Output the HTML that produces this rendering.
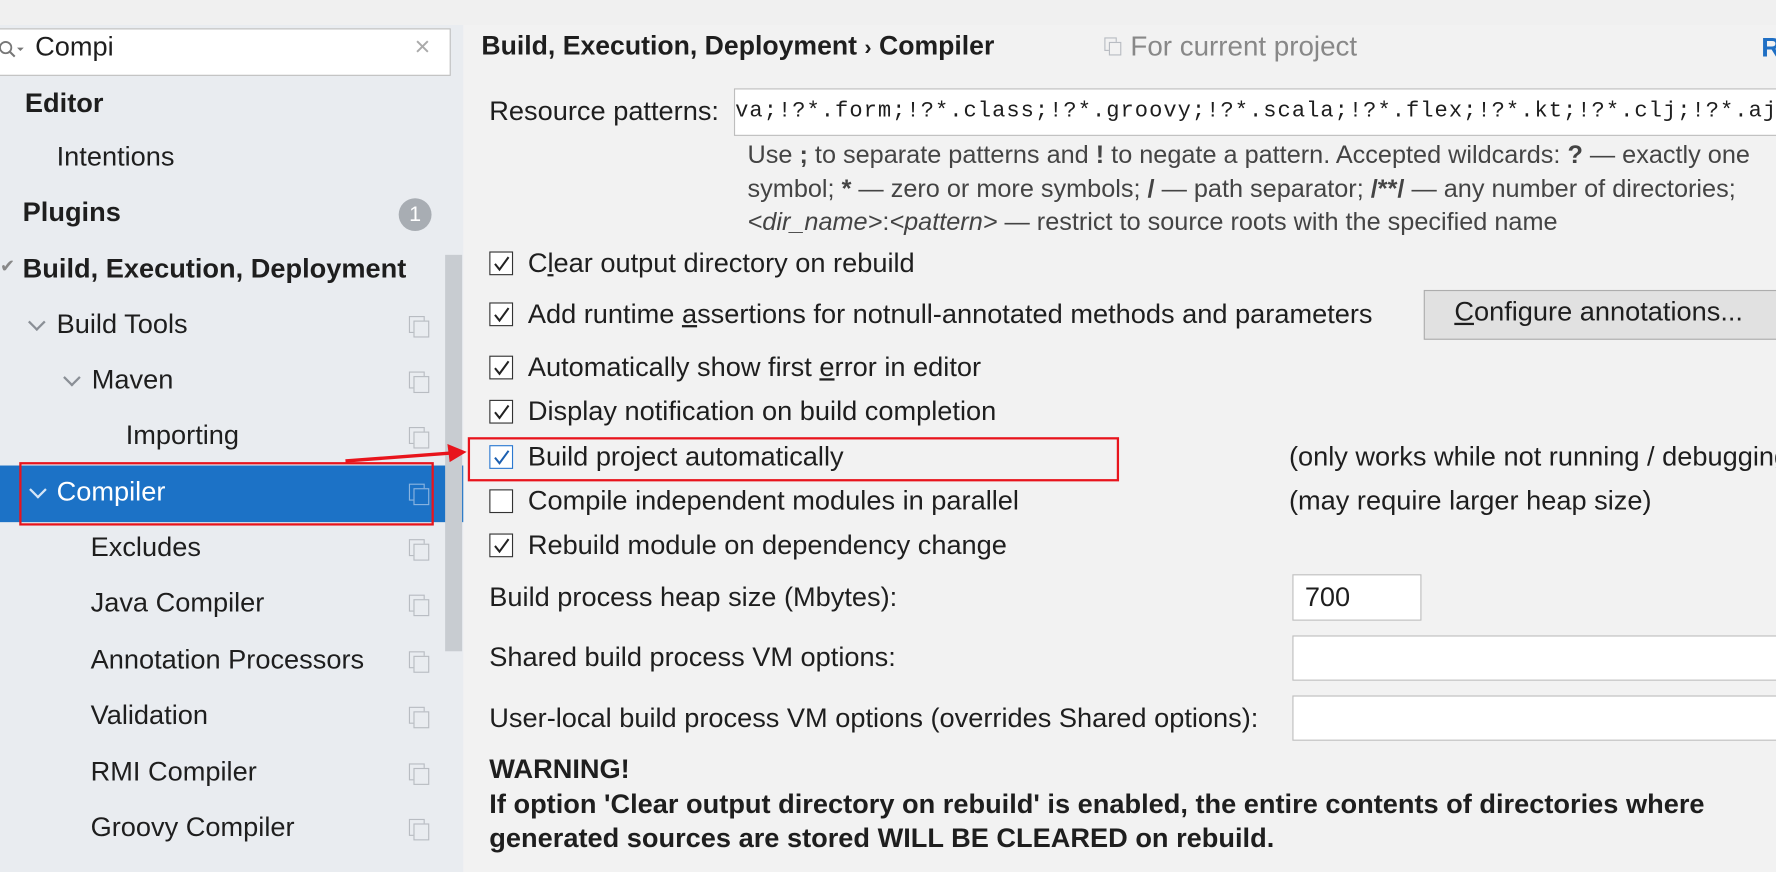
<!DOCTYPE html>
<html><head><meta charset="utf-8"><style>
html,body{margin:0;padding:0;width:1776px;height:872px;overflow:hidden;background:#f2f2f2}
#w{position:absolute;left:0;top:0;width:1568px;height:770px;transform:scale(1.13265);transform-origin:0 0;font-family:"Liberation Sans",sans-serif;color:#1e1e1e;font-size:24px}
.a{position:absolute;white-space:nowrap}
#left{position:absolute;left:0;top:0;width:409px;height:770px;background:#e9ecf0}
.b{font-weight:bold}
.ic{position:absolute;width:12px;height:13px;border:1.5px solid #b8bcc2;background:#e9ecf0}
.cb{position:absolute;left:432px;width:19px;height:19px;border:1.5px solid #333;background:#fff}
.cb svg{position:absolute;left:1px;top:1px}
.inp{position:absolute;background:#fff;border:1.5px solid #bdbdbd}
.h{color:#444;font-size:22.3px}
.chev{position:absolute;width:9px;height:9px;border-right:2px solid #8a8f96;border-bottom:2px solid #8a8f96;transform:rotate(45deg)}
</style></head><body><div id="w">
<div id="left"></div>
<div class="a" style="left:0;top:0;width:1568px;height:22px;background:#f0f0f0"></div>
<div class="inp" style="left:-2px;top:25px;width:398px;height:40px"></div>
<svg class="a" style="left:0;top:34px" width="22" height="20"><circle cx="5" cy="8" r="5" fill="none" stroke="#777" stroke-width="1.6"/><line x1="9" y1="12" x2="13" y2="16" stroke="#777" stroke-width="1.8"/><path d="M15 8h6l-3 3z" fill="#777"/></svg>
<div class="a" style="left:31px;top:28px;font-size:24px">Compi</div>
<div class="a" style="left:366px;top:28px;font-size:24px;color:#aaa">×</div>
<div class="a b" style="left:22px;top:78px">Editor</div>
<div class="a" style="left:50px;top:125px">Intentions</div>
<div class="a b" style="left:20px;top:174px">Plugins</div>
<div class="a" style="left:352px;top:175px;width:29px;height:29px;border-radius:50%;background:#a8adb3;color:#fff;text-align:center;line-height:29px;font-size:19px">1</div>
<div class="a" style="left:0;top:225px;color:#888;font-size:16px">✔</div>
<div class="a b" style="left:20px;top:224px">Build, Execution, Deployment</div>
<div class="chev" style="left:27px;top:279px"></div>
<div class="a" style="left:50px;top:273px">Build Tools</div>
<div class="chev" style="left:58px;top:328px"></div>
<div class="a" style="left:81px;top:322px">Maven</div>
<div class="a" style="left:111px;top:371px">Importing</div>
<div class="a" style="left:0;top:411px;width:409px;height:50px;background:#1c72c6"></div>
<div class="chev" style="left:28px;top:427px;border-color:#d6e6f6"></div>
<div class="a" style="left:50px;top:421px;color:#fff">Compiler</div>
<div class="a" style="left:80px;top:470px">Excludes</div>
<div class="a" style="left:80px;top:519px">Java Compiler</div>
<div class="a" style="left:80px;top:569px">Annotation Processors</div>
<div class="a" style="left:80px;top:618px">Validation</div>
<div class="a" style="left:80px;top:668px">RMI Compiler</div>
<div class="a" style="left:80px;top:717px">Groovy Compiler</div>
<div class="a" style="left:393px;top:225px;width:15px;height:350px;background:#c8ccd1"></div>
<div class="ic" style="left:361px;top:279px"></div><div class="ic" style="left:365px;top:283px"></div>
<div class="ic" style="left:361px;top:328px"></div><div class="ic" style="left:365px;top:332px"></div>
<div class="ic" style="left:361px;top:377px"></div><div class="ic" style="left:365px;top:381px"></div>
<div class="ic" style="left:361px;top:427px;background:#1c72c6;border-color:#8ab4e0"></div><div class="ic" style="left:365px;top:431px;background:#1c72c6;border-color:#8ab4e0"></div>
<div class="ic" style="left:361px;top:476px"></div><div class="ic" style="left:365px;top:480px"></div>
<div class="ic" style="left:361px;top:525px"></div><div class="ic" style="left:365px;top:529px"></div>
<div class="ic" style="left:361px;top:575px"></div><div class="ic" style="left:365px;top:579px"></div>
<div class="ic" style="left:361px;top:624px"></div><div class="ic" style="left:365px;top:628px"></div>
<div class="ic" style="left:361px;top:674px"></div><div class="ic" style="left:365px;top:678px"></div>
<div class="ic" style="left:361px;top:723px"></div><div class="ic" style="left:365px;top:727px"></div>
<div class="a" style="left:17px;top:408px;width:362px;height:52px;border:2px solid #e8141c"></div>

<div class="a b" style="left:425px;top:27px;font-size:23.5px">Build, Execution, Deployment <span style="font-size:19px">›</span> Compiler</div>
<div class="ic" style="left:975px;top:33px;width:9px;height:10px;background:#f2f2f2"></div><div class="ic" style="left:979px;top:37px;width:9px;height:10px;background:#f2f2f2"></div>
<div class="a" style="left:998px;top:28px;color:#888;font-size:24.5px">For current project</div>
<div class="a b" style="left:1555px;top:29px;color:#1f6fc4">R</div>
<div class="a" style="left:432px;top:85px">Resource patterns:</div>
<div class="inp" style="left:648px;top:78px;width:930px;height:40px;overflow:hidden"><div class="a" style="right:10px;top:8px;font-family:'Liberation Mono',monospace;font-size:19.5px;letter-spacing:0.9px">*.java;!?*.form;!?*.class;!?*.groovy;!?*.scala;!?*.flex;!?*.kt;!?*.clj;!?*.aj</div></div>
<div class="a h" style="left:660px;top:124px">Use <b>;</b> to separate patterns and <b>!</b> to negate a pattern. Accepted wildcards: <b>?</b> — exactly one</div>
<div class="a h" style="left:660px;top:154px">symbol; <b>*</b> — zero or more symbols; <b>/</b> — path separator; <b>/**/</b> — any number of directories;</div>
<div class="a h" style="left:660px;top:183px"><i>&lt;dir_name&gt;</i>:<i>&lt;pattern&gt;</i> — restrict to source roots with the specified name</div>

<div class="cb" style="top:222px"><svg width="18" height="18"><path d="M3 9l4 5 8-11" fill="none" stroke="#222" stroke-width="1.8"/></svg></div>
<div class="a" style="left:466px;top:219px">C<u>l</u>ear output directory on rebuild</div>
<div class="cb" style="top:267px"><svg width="18" height="18"><path d="M3 9l4 5 8-11" fill="none" stroke="#222" stroke-width="1.8"/></svg></div>
<div class="a" style="left:466px;top:264px">Add runtime <u>a</u>ssertions for notnull-annotated methods and parameters</div>
<div class="a" style="left:1257px;top:256px;width:320px;height:42px;background:#e1e1e1;border:1.5px solid #adadad"></div>
<div class="a" style="left:1284px;top:262px"><u>C</u>onfigure annotations...</div>
<div class="cb" style="top:314px"><svg width="18" height="18"><path d="M3 9l4 5 8-11" fill="none" stroke="#222" stroke-width="1.8"/></svg></div>
<div class="a" style="left:466px;top:311px">Automatically show first <u>e</u>rror in editor</div>
<div class="cb" style="top:353px"><svg width="18" height="18"><path d="M3 9l4 5 8-11" fill="none" stroke="#222" stroke-width="1.8"/></svg></div>
<div class="a" style="left:466px;top:350px">Display notification on build completion</div>
<div class="cb" style="top:393px;border-color:#2b78d0"><svg width="18" height="18"><path d="M3 9l4 5 8-11" fill="none" stroke="#1c5fb0" stroke-width="1.8"/></svg></div>
<div class="a" style="left:466px;top:390px">Build project automatically</div>
<div class="a" style="left:1138px;top:390px">(only works while not running / debugging)</div>
<div class="cb" style="top:432px"></div>
<div class="a" style="left:466px;top:429px">Compile independent modules in parallel</div>
<div class="a" style="left:1138px;top:429px">(may require larger heap size)</div>
<div class="cb" style="top:471px"><svg width="18" height="18"><path d="M3 9l4 5 8-11" fill="none" stroke="#222" stroke-width="1.8"/></svg></div>
<div class="a" style="left:466px;top:468px">Rebuild module on dependency change</div>
<div class="a" style="left:413px;top:386px;width:571px;height:35px;border:2px solid #e8141c"></div>
<svg class="a" style="left:300px;top:390px" width="115" height="25"><line x1="5" y1="17" x2="98" y2="10" stroke="#e8141c" stroke-width="3"/><path d="M112 9L95 2 97 18z" fill="#e8141c"/></svg>

<div class="a" style="left:432px;top:514px">Build process heap size (Mbytes):</div>
<div class="inp" style="left:1141px;top:507px;width:112px;height:39px"></div>
<div class="a" style="left:1152px;top:514px">700</div>
<div class="a" style="left:432px;top:567px">Shared build process VM options:</div>
<div class="inp" style="left:1141px;top:561px;width:440px;height:38px"></div>
<div class="a" style="left:432px;top:621px">User-local build process VM options (overrides Shared options):</div>
<div class="inp" style="left:1141px;top:614px;width:440px;height:38px"></div>
<div class="a b" style="left:432px;top:666px">WARNING!</div>
<div class="a b" style="left:432px;top:697px">If option 'Clear output directory on rebuild' is enabled, the entire contents of directories where</div>
<div class="a b" style="left:432px;top:727px">generated sources are stored WILL BE CLEARED on rebuild.</div>
</div></body></html>
